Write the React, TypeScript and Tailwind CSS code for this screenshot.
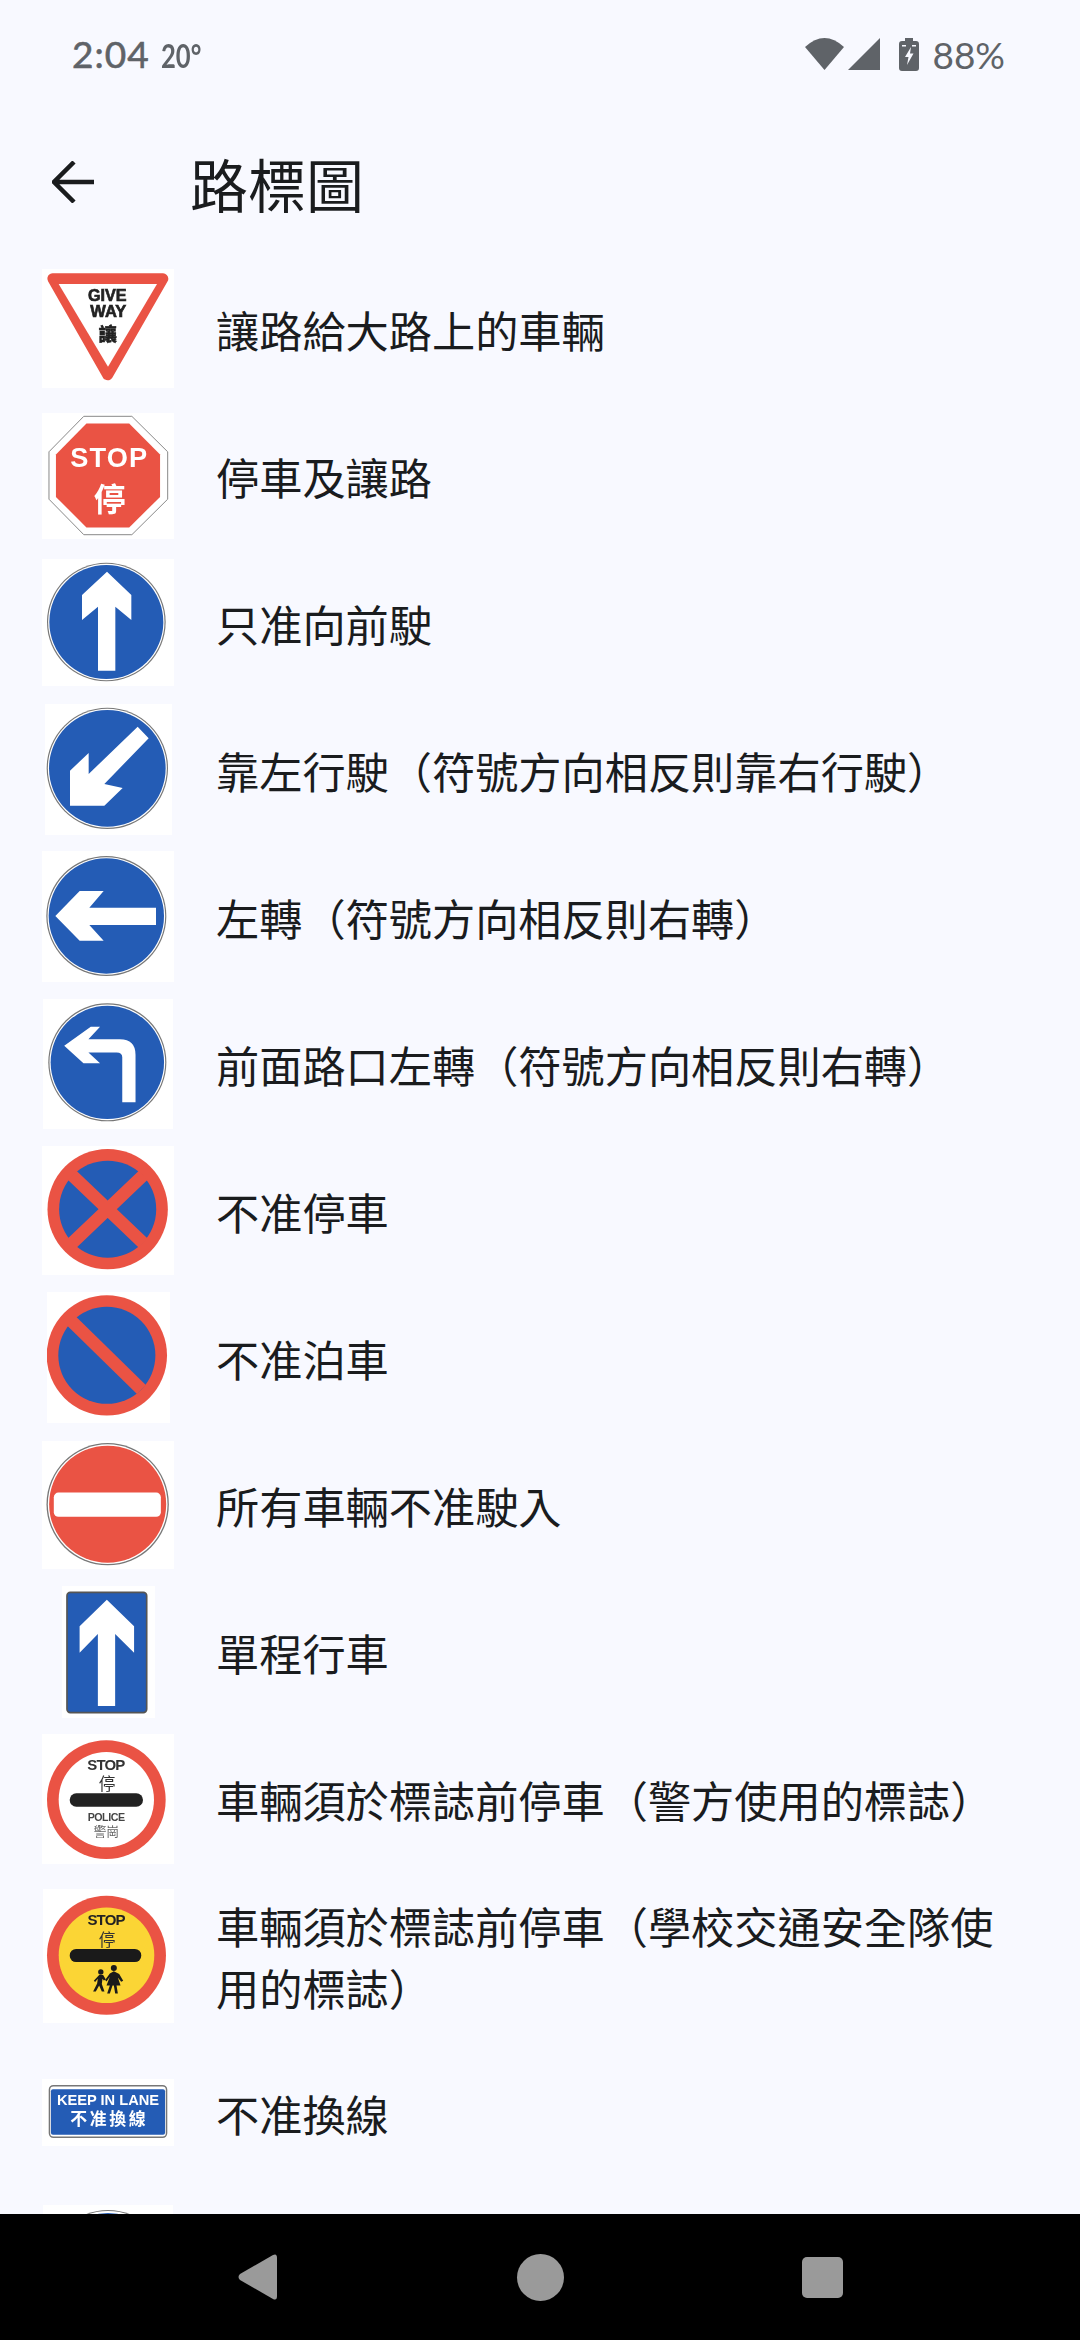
import React from "react";

const BLUE = "#245cb5";
const RED = "#ea5344";
const CJK = "'Noto Sans CJK TC','Noto Sans CJK SC',sans-serif";
const LAT = "'Liberation Sans',sans-serif";

function Box({ w, h, vb, children }: { w: number; h: number; vb: string; children: React.ReactNode }) {
  return (
    <svg width={w} height={h} viewBox={vb} className="block bg-white blur-[0.4px]">
      {children}
    </svg>
  );
}

function Ring({ cx, cy, r }: { cx: number; cy: number; r: number }) {
  return (
    <>
      <circle cx={cx} cy={cy} r={r} fill="#777" />
      <circle cx={cx} cy={cy} r={r - 3.5} fill="#fff" />
      <circle cx={cx} cy={cy} r={r - 7} fill={BLUE} />
    </>
  );
}

const signs: Record<string, React.ReactNode> = {
  giveway: (
    <Box w={132} h={119} vb="65 27 396 357">
      <path d="M97 56H428L262 345Z" fill="#fff" stroke={RED} strokeWidth="32" strokeLinejoin="round" />
      <path d="M115 72H410L263 320Z" fill="#fff" />
      <text x="261" y="123" textAnchor="middle" fontFamily={LAT} fontWeight="700" fontSize="50" fill="#222" stroke="#222" strokeWidth="2" textLength="116" lengthAdjust="spacingAndGlyphs">GIVE</text>
      <text x="264" y="170" textAnchor="middle" fontFamily={LAT} fontWeight="700" fontSize="50" fill="#222" stroke="#222" strokeWidth="2" textLength="108" lengthAdjust="spacingAndGlyphs">WAY</text>
      <text x="262" y="244" textAnchor="middle" fontFamily={CJK} fontWeight="900" fontSize="54" fill="#222" stroke="#222" strokeWidth="1.5">讓</text>
    </Box>
  ),
  stop: (
    <Box w={132} h={126} vb="65 455 396 380">
      <path d="M190 465H335L443 572V715L335 822H190L85 715V572Z" fill="#fff" stroke="#888" strokeWidth="3" />
      <path d="M198 487H327L420 580V708L327 800H198L106 708V580Z" fill={RED} />
      <text x="265" y="618" textAnchor="middle" fontFamily={LAT} fontWeight="700" fontSize="82" fill="#fff" textLength="232">STOP</text>
      <text x="268" y="752" textAnchor="middle" fontFamily={CJK} fontWeight="700" fontSize="96" fill="#fff">停</text>
    </Box>
  ),
  ahead: (
    <Box w={132} h={127} vb="65 897 396 381">
      <Ring cx={258} cy={1086} r={178} />
      <path d="M260 935L333 1005V1080L285 1040V1232H233V1040L185 1080V1005Z" fill="#fff" />
    </Box>
  ),
  keepleft: (
    <Box w={127} h={131} vb="72 40 381 393">
      <Ring cx={259} cy={233} r={182} />
      <path d="M350 108L383 143L250 280L305 292L250 345H147V240L203 187V250Z" fill="#fff" />
    </Box>
  ),
  left: (
    <Box w={132} h={131} vb="65 483 396 393">
      <Ring cx={258} cy={678} r={180} />
      <path d="M105 678L178 603H250L207 653H407V705H207L250 752H178Z" fill="#fff" />
    </Box>
  ),
  turnleft: (
    <Box w={130} h={130} vb="68 925 392 390">
      <Ring cx={262} cy={1115} r={178} />
      <path d="M132 1065L212 1008H240L205 1045H300Q347 1045 347 1092V1235H307V1100Q307 1085 290 1085H205L240 1118H190Z" fill="#fff" />
    </Box>
  ),
  noStop: (
    <Box w={132} h={129} vb="65 47 396 388">
      <circle cx={262} cy={237} r={181} fill={RED} />
      <circle cx={262} cy={237} r={146} fill={BLUE} />
      <path d="M155 135L369 339M369 135L155 339" stroke={RED} strokeWidth="38" />
    </Box>
  ),
  noPark: (
    <Box w={123} h={131} vb="78 485 370 393">
      <circle cx={258} cy={675} r={181} fill={RED} />
      <circle cx={258} cy={675} r={146} fill={BLUE} />
      <path d="M150 570L362 778" stroke={RED} strokeWidth="38" />
    </Box>
  ),
  noEntry: (
    <Box w={132} h={128} vb="65 930 396 385">
      <circle cx={262} cy={1120} r={184} fill="#777" />
      <circle cx={262} cy={1120} r={180} fill="#fff" />
      <circle cx={262} cy={1120} r={176} fill={RED} />
      <rect x="100" y="1085" width="322" height="73" rx="14" fill="#fff" />
    </Box>
  ),
  oneway: (
    <Box w={93} h={132} vb="125 75 280 395">
      <rect x="140" y="93" width="240" height="362" rx="10" fill={BLUE} stroke="#555" strokeWidth="5" />
      <path d="M260 115L342 195V275L285 218V435H233V218L178 275V195Z" fill="#fff" />
    </Box>
  ),
  police: (
    <Box w={132} h={130} vb="65 40 396 390">
      <circle cx={258} cy={237} r={178} fill={RED} />
      <circle cx={258} cy={237} r={143} fill="#fff" />
      <text x="258" y="148" textAnchor="middle" fontFamily={LAT} fontWeight="700" fontSize="45" fill="#333" textLength="114">STOP</text>
      <text x="260" y="208" textAnchor="middle" fontFamily={CJK} fontSize="50" fill="#333">停</text>
      <rect x="148" y="218" width="220" height="40" rx="20" fill="#222" />
      <text x="258" y="301" textAnchor="middle" fontFamily={LAT} fontWeight="700" fontSize="32" fill="#444" textLength="112">POLICE</text>
      <text x="258" y="347" textAnchor="middle" fontFamily={CJK} fontSize="38" fill="#666">警崗</text>
    </Box>
  ),
  school: (
    <Box w={131} h={134} vb="68 28 392 400">
      <circle cx={258} cy={226} r={178} fill={RED} />
      <circle cx={258} cy={226} r={143} fill="#fbd535" />
      <text x="258" y="135" textAnchor="middle" fontFamily={LAT} fontWeight="700" fontSize="45" fill="#222" textLength="114">STOP</text>
      <text x="260" y="198" textAnchor="middle" fontFamily={CJK} fontSize="50" fill="#333">停</text>
      <rect x="148" y="207" width="214" height="39" rx="19" fill="#1a1a1a" />
      <circle cx="280" cy="264" r="9" fill="#1a1a1a" />
      <path d="M280 274L296 282L308 302L302 305L292 292L300 316H288L292 340H284L280 316H276L268 340H260L268 316H258L268 290L258 304L254 300L268 280Z" fill="#1a1a1a" />
      <circle cx="241" cy="276" r="8" fill="#1a1a1a" />
      <path d="M236 285H248L256 298L250 301L246 296L244 312L252 334H244L236 316L226 334H218L230 310L232 296L224 306L220 302Z" fill="#1a1a1a" />
    </Box>
  ),
  lane: (
    <Box w={133} h={67} vb="0 0 133 67">
      <rect x="7.5" y="6.5" width="118" height="52" rx="4" fill="#fff" stroke="#777" strokeWidth="1.5" />
      <rect x="9" y="10" width="115" height="46" rx="2" fill={BLUE} />
      <text x="66.5" y="26" textAnchor="middle" fontFamily={LAT} fontWeight="700" fontSize="15" fill="#fff" textLength="103" lengthAdjust="spacingAndGlyphs">KEEP IN LANE</text>
      <text x="66.5" y="46" textAnchor="middle" fontFamily={CJK} fontWeight="700" fontSize="17" fill="#fff" textLength="76">不准換線</text>
    </Box>
  ),
  next: (
    <Box w={130} h={130} vb="0 0 130 130">
      <circle cx={65} cy={65} r={60} fill="#777" />
      <circle cx={65} cy={65} r={59} fill="#fff" />
      <circle cx={65} cy={65} r={57} fill={BLUE} />
    </Box>
  ),
};

const rows: { sign: string; text: string; h: string }[] = [
  { sign: "giveway", text: "讓路給大路上的車輛", h: "h-[147px]" },
  { sign: "stop", text: "停車及讓路", h: "h-[147px]" },
  { sign: "ahead", text: "只准向前駛", h: "h-[147px]" },
  { sign: "keepleft", text: "靠左行駛（符號方向相反則靠右行駛）", h: "h-[147px]" },
  { sign: "left", text: "左轉（符號方向相反則右轉）", h: "h-[147px]" },
  { sign: "turnleft", text: "前面路口左轉（符號方向相反則右轉）", h: "h-[147px]" },
  { sign: "noStop", text: "不准停車", h: "h-[147px]" },
  { sign: "noPark", text: "不准泊車", h: "h-[147px]" },
  { sign: "noEntry", text: "所有車輛不准駛入", h: "h-[147px]" },
  { sign: "oneway", text: "單程行車", h: "h-[147px]" },
  { sign: "police", text: "車輛須於標誌前停車（警方使用的標誌）", h: "h-[147px]" },
  { sign: "school", text: "車輛須於標誌前停車（學校交通安全隊使用的標誌）", h: "h-[167px]" },
  { sign: "lane", text: "不准換線", h: "h-[147px]" },
  { sign: "next", text: "", h: "h-[168px]" },
];

export default function App() {
  return (
    <div className="w-[1080px] h-[2340px] flex flex-col overflow-hidden bg-[#f8f9ff] font-['Noto_Sans_CJK_TC','Noto_Sans_CJK_SC',sans-serif]">
      <div className="h-[108px] shrink-0 flex items-center justify-between pl-[72px] pr-[75px] text-[#5f6368] font-['Lato',sans-serif]">
        <div className="flex items-baseline gap-[11px]">
          <span className="text-[37px] tracking-[1px] [-webkit-text-stroke:0.6px_#5f6368]">2:04</span>
          <span className="text-[32px] font-bold origin-left scale-x-[0.8]">20°</span>
        </div>
        <div className="flex items-center">
          <svg width="39" height="32" viewBox="0 0 39 32" className="block">
            <path d="M19.5 32L0 9Q19.5 -9 39 9Z" fill="#5f6368" />
          </svg>
          <svg width="32" height="32" viewBox="0 0 32 32" className="block ml-[4px]">
            <path d="M32 0V32H0Z" fill="#5f6368" />
          </svg>
          <svg width="20" height="33" viewBox="0 0 20 33" className="block ml-[19px]">
            <path d="M6 0H14V3H17Q20 3 20 6V30Q20 33 17 33H3Q0 33 0 30V6Q0 3 3 3H6Z" fill="#5f6368" />
            <path d="M12 9L6 19H9.5L8 27L14.5 15.5H11Z" fill="#f8f9ff" />
            <path d="M3 7H7V8.5H3ZM13 7H17V8.5H13Z" fill="#f8f9ff" />
          </svg>
          <span className="ml-[13px] text-[37px] leading-none">88%</span>
        </div>
      </div>
      <div className="h-[147px] shrink-0 flex items-center pl-[52px]">
        <svg width="42" height="42" viewBox="0 0 42 42" fill="none" stroke="#1a1c1e" strokeWidth="4.5" className="block">
          <path d="M42 21H3M22 1L2 21L22 41" />
        </svg>
        <h1 className="ml-[96px] mt-[2px] text-[58px] font-normal text-[#1a1c1e] leading-none">路標圖</h1>
      </div>
      <div className="flex-1 min-h-0 overflow-hidden">
        {rows.map((r, i) => (
          <div key={i} className={`${r.h} flex items-center`}>
            <div className="w-[132px] ml-[42px] shrink-0 flex justify-center">{signs[r.sign]}</div>
            <p className="ml-[42px] w-[810px] text-[43.2px] leading-[62px] text-[#1a1c1e]">{r.text}</p>
          </div>
        ))}
      </div>
      <div className="h-[126px] shrink-0 bg-black grid grid-cols-3 items-center px-[117px]">
        <svg width="40" height="46" viewBox="0 0 40 46" className="block justify-self-center">
          <path d="M35 1Q39 -1 39 4V42Q39 47 35 45L2 26Q-1 23 2 20Z" fill="#9a9a9a" />
        </svg>
        <div className="w-[47px] h-[47px] rounded-full bg-[#9a9a9a] justify-self-center" />
        <div className="w-[41px] h-[41px] rounded-[5px] bg-[#9a9a9a] justify-self-center" />
      </div>
    </div>
  );
}
